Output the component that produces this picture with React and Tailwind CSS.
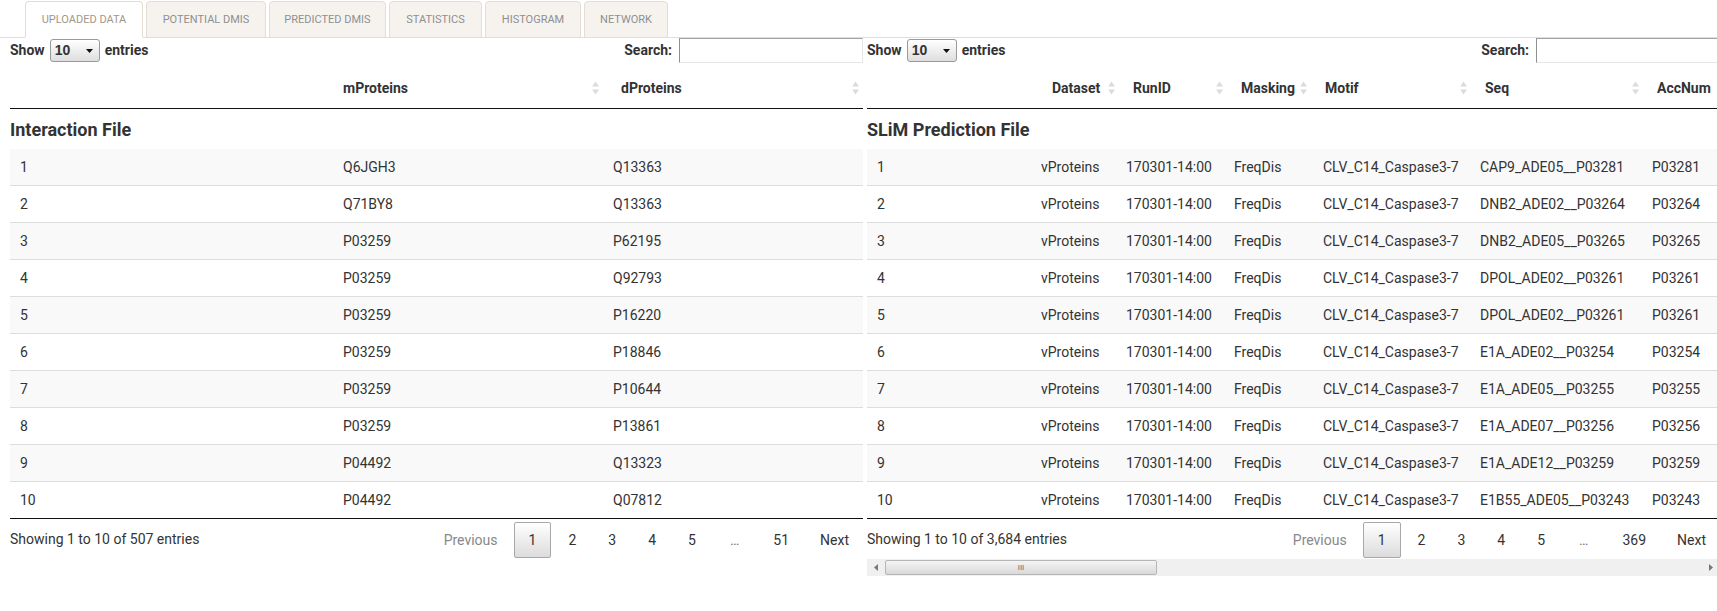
import React from "react";

const tabs = [
  { label: "Uploaded Data", w: "w-[118px]", active: true },
  { label: "Potential DMIs", w: "w-[120px]" },
  { label: "Predicted DMIs", w: "w-[117px]" },
  { label: "Statistics", w: "w-[93px]" },
  { label: "Histogram", w: "w-[96px]" },
  { label: "Network", w: "w-[84px]" },
];

const interactions = [
  ["1", "Q6JGH3", "Q13363"],
  ["2", "Q71BY8", "Q13363"],
  ["3", "P03259", "P62195"],
  ["4", "P03259", "Q92793"],
  ["5", "P03259", "P16220"],
  ["6", "P03259", "P18846"],
  ["7", "P03259", "P10644"],
  ["8", "P03259", "P13861"],
  ["9", "P04492", "Q13323"],
  ["10", "P04492", "Q07812"],
];

const seqs = [
  ["CAP9_ADE05__P03281", "P03281"],
  ["DNB2_ADE02__P03264", "P03264"],
  ["DNB2_ADE05__P03265", "P03265"],
  ["DPOL_ADE02__P03261", "P03261"],
  ["DPOL_ADE02__P03261", "P03261"],
  ["E1A_ADE02__P03254", "P03254"],
  ["E1A_ADE05__P03255", "P03255"],
  ["E1A_ADE07__P03256", "P03256"],
  ["E1A_ADE12__P03259", "P03259"],
  ["E1B55_ADE05__P03243", "P03243"],
];

const predictions = seqs.map(([seq, acc], i) => [
  String(i + 1),
  "vProteins",
  "170301-14:00",
  "FreqDis",
  "CLV_C14_Caspase3-7",
  seq,
  acc,
]);

function SortIcon({ className = "right-[8px]" }) {
  return (
    <svg width="7" height="13" viewBox="0 0 7 13" className={`absolute top-1/2 -translate-y-1/2 ${className}`}>
      <path d="M3.5 0L7 5H0z" fill="#dcdcdc" />
      <path d="M3.5 13L0 8h7z" fill="#dcdcdc" />
    </svg>
  );
}

function Controls() {
  return (
    <div className="flex h-[25px] items-center justify-between font-bold">
      <div className="flex items-center">
        <span>Show</span>
        <div className="mx-[5px] flex h-[23px] w-[50px] items-center justify-between rounded-[3px] border border-[#9a9a9a] bg-gradient-to-b from-white to-[#dedede] pl-[4px] pr-[6px]">
          <span className="font-['Liberation_Sans',sans-serif] text-[14px]">10</span>
          <svg width="7" height="4" viewBox="0 0 7 4">
            <path d="M0 0h7L3.5 4z" fill="#111" />
          </svg>
        </div>
        <span>entries</span>
      </div>
      <div className="flex items-center">
        <span className="mr-[7px]">Search:</span>
        <div className="h-[25px] w-[184px] border border-t-[#a3a3a3] border-l-[#8f8f8f] border-r-[#e6e6e6] border-b-[#e6e6e6] bg-white" />
      </div>
    </div>
  );
}

function Pager({ pages }) {
  return (
    <div className="mt-[3px] flex items-center gap-[2px]">
      <span className="flex h-[36px] items-center px-[14px] text-[#888]">Previous</span>
      {pages.map((p, i) =>
        p === "…" ? (
          <span key={i} className="flex h-[36px] items-center px-[17px] text-[#777]">
            …
          </span>
        ) : (
          <span
            key={i}
            className={`flex h-[36px] items-center px-[14px] ${
              i === 0
                ? "rounded-[2px] border border-[#a8a8a8] bg-gradient-to-b from-white to-[#dcdcdc]"
                : "border border-transparent"
            }`}
          >
            {p}
          </span>
        )
      )}
      <span className="flex h-[36px] items-center px-[14px]">Next</span>
    </div>
  );
}

function LeftTable() {
  return (
    <div className="w-[853px] shrink-0">
      <Controls />
      <div className="grid h-[46px] grid-cols-[323px_278px_252px] items-center border-b border-[#111] pt-[5px] font-bold">
        <div />
        <div className="relative px-[10px]">
          mProteins
          <SortIcon className="right-[12px]" />
        </div>
        <div className="relative px-[10px]">
          dProteins
          <SortIcon className="right-[4px]" />
        </div>
      </div>
      <div className="flex h-[40px] items-center text-[18px] font-bold">Interaction File</div>
      <div className="border-b border-[#111]">
        {interactions.map((r, i) => (
          <div
            key={i}
            className={`grid h-[36px] grid-cols-[323px_270px_260px] items-center box-content ${
              i > 0 ? "border-t border-[#ddd]" : ""
            } ${i % 2 === 0 ? "bg-[#f9f9f9]" : "bg-white"}`}
          >
            {r.map((c, j) => (
              <div key={j} className="px-[10px]">
                {c}
              </div>
            ))}
          </div>
        ))}
      </div>
      <div className="flex items-start justify-between">
        <div className="mt-[10px]">Showing 1 to 10 of 507 entries</div>
        <Pager pages={["1", "2", "3", "4", "5", "…", "51"]} />
      </div>
    </div>
  );
}

function RightTable() {
  const heads = ["Dataset", "RunID", "Masking", "Motif", "Seq", "AccNum"];
  return (
    <div className="w-[853px] shrink-0 overflow-hidden">
      <Controls />
      <div className="grid h-[46px] w-[960px] grid-cols-[175px_81px_108px_84px_160px_172px_180px] items-center border-b border-[#111] pt-[5px] font-bold">
        <div />
        {heads.map((h) => (
          <div key={h} className="relative px-[10px]">
            {h}
            <SortIcon />
          </div>
        ))}
      </div>
      <div className="flex h-[40px] items-center text-[18px] font-bold">SLiM Prediction File</div>
      <div className="w-[960px] border-b border-[#111]">
        {predictions.map((r, i) => (
          <div
            key={i}
            className={`grid h-[36px] grid-cols-[164px_85px_108px_89px_157px_172px_185px] items-center box-content ${
              i > 0 ? "border-t border-[#ddd]" : ""
            } ${i % 2 === 0 ? "bg-[#f9f9f9]" : "bg-white"}`}
          >
            {r.map((c, j) => (
              <div key={j} className="whitespace-nowrap px-[10px]">
                {c}
              </div>
            ))}
          </div>
        ))}
      </div>
      <div className="flex items-start justify-between">
        <div className="mt-[10px]">Showing 1 to 10 of 3,684 entries</div>
        <Pager pages={["1", "2", "3", "4", "5", "…", "369"]} />
      </div>
      {/* horizontal scrollbar */}
      <div className="mt-[1px] flex h-[17px] items-center bg-[#f0f0f0]">
        <div className="flex w-[18px] justify-center">
          <svg width="4" height="7" viewBox="0 0 4 7">
            <path d="M4 0v7L0 3.5z" fill="#777" />
          </svg>
        </div>
        <div className="flex h-[15px] w-[272px] items-center justify-center rounded-[2px] border border-[#b5b5b5] bg-gradient-to-b from-[#f4f4f4] to-[#d9d9d9] text-[8px] leading-none text-[#666]">
          III
        </div>
        <div className="flex-1" />
        <div className="flex w-[18px] justify-center">
          <svg width="4" height="7" viewBox="0 0 4 7">
            <path d="M0 0v7l4-3.5z" fill="#777" />
          </svg>
        </div>
      </div>
    </div>
  );
}

export default function App() {
  return (
    <div className="h-[611px] w-[1717px] overflow-hidden bg-white font-['Roboto',sans-serif] text-[14px] text-[#333]">
      <div className="flex h-[38px] items-end gap-[3px] border-b border-[#e3ddd3] pl-[25px]">
        {tabs.map((t) => (
          <div
            key={t.label}
            className={`-mb-px flex h-[37px] items-center justify-center rounded-t-[4px] border pt-[2px] text-[11px] uppercase ${t.w} ${
              t.active
                ? "border-[#e3ddd3] border-b-white bg-white text-[#a0978c]"
                : "border-[#e3ddd3] bg-[#f6f3ef] text-[#8f8f8f]"
            }`}
          >
            {t.label}
          </div>
        ))}
      </div>
      <div className="flex gap-[4px] pl-[10px]">
        <LeftTable />
        <RightTable />
      </div>
    </div>
  );
}
